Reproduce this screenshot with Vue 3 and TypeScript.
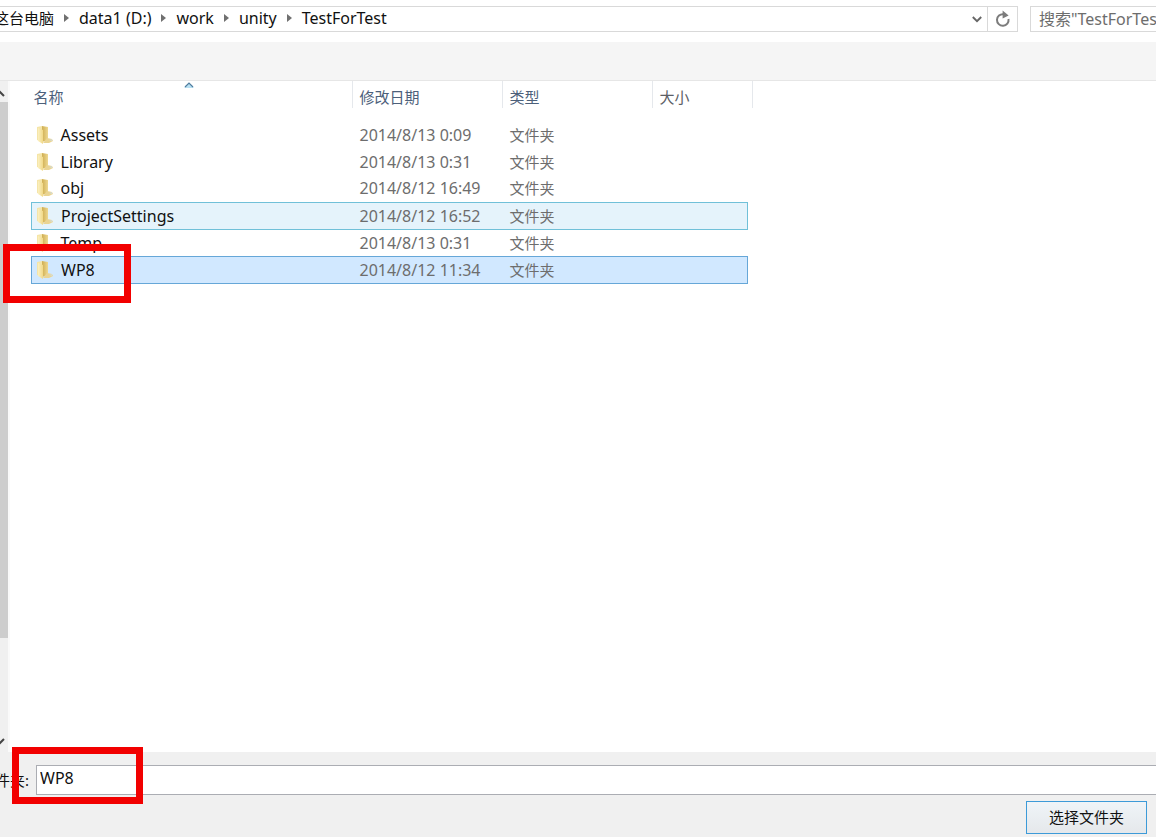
<script setup lang="ts">
import { ref } from 'vue'

interface Entry {
  name: string
  date: string
  kind: string
}

const root = '这台电脑'
const crumbs: string[] = ['data1 (D:)', 'work', 'unity', 'TestForTest']

const entries: Entry[] = [
  { name: 'Assets', date: '2014/8/13 0:09', kind: '文件夹' },
  { name: 'Library', date: '2014/8/13 0:31', kind: '文件夹' },
  { name: 'obj', date: '2014/8/12 16:49', kind: '文件夹' },
  { name: 'ProjectSettings', date: '2014/8/12 16:52', kind: '文件夹' },
  { name: 'Temp', date: '2014/8/13 0:31', kind: '文件夹' },
  { name: 'WP8', date: '2014/8/12 11:34', kind: '文件夹' },
]

const hovered = 'ProjectSettings'
const selected = ref('WP8')
const query = ref('')
</script>

<template>
  <div class="dialog">
    <header class="top">
      <nav class="address" aria-label="路径">
        <div class="crumbs">
          <a class="root" href="#" @click.prevent>{{ root }}</a>
          <template v-for="crumb in crumbs" :key="crumb">
            <svg class="sep" viewBox="0 0 5 8"><path d="M0 0L5 4L0 8Z" /></svg>
            <a href="#" @click.prevent>{{ crumb }}</a>
          </template>
        </div>
        <button class="drop" type="button" aria-label="历史记录">
          <svg width="10" height="7" viewBox="0 0 10 7"><path d="M0.8 1L5 5.2L9.2 1" fill="none" stroke="#666" stroke-width="1.9" /></svg>
        </button>
        <button class="refresh" type="button" aria-label="刷新">
          <svg width="16" height="18" viewBox="0 0 16 18">
            <path d="M13.5 9A5.8 5.8 0 1 1 8.5 4.2" fill="none" stroke="#7c7c7c" stroke-width="2" />
            <path d="M7.6 0.5L13.6 5.4L7.6 8.4Z" fill="#7c7c7c" />
          </svg>
        </button>
      </nav>
      <input v-model="query" class="search" type="text" aria-label="搜索" placeholder="搜索&quot;TestForTest&quot;">
    </header>

    <div class="toolbar"></div>

    <main class="body">
      <div class="scroll">
        <svg class="arrow" viewBox="0 0 8 21"><path d="M-4 15L0 11L4 15" /></svg>
        <div class="thumb"></div>
        <div class="rest"></div>
        <svg class="arrow" viewBox="0 0 8 21"><path d="M-4 8L0 12L4 8" /></svg>
      </div>
      <div class="list">
        <table>
          <colgroup><col class="c-name"><col class="c-date"><col class="c-kind"><col class="c-size"></colgroup>
          <thead>
            <tr>
              <th>
                <div class="head first">名称
                  <svg class="sort" width="10" height="6" viewBox="0 0 10 6"><path d="M0 6L5 1L10 6Z" fill="#b9e0f2" /><path d="M1 5L5 1L9 5" fill="none" stroke="#4f7c9e" stroke-width="1.2" /></svg>
                </div>
              </th>
              <th><div class="head">修改日期</div></th>
              <th><div class="head">类型</div></th>
              <th><div class="head last">大小</div></th>
            </tr>
          </thead>
          <tbody>
            <tr
              v-for="entry in entries"
              :key="entry.name"
              :class="{ hover: entry.name === hovered, selected: entry.name === selected }"
              @click="selected = entry.name"
            >
              <td>
                <div class="name">
                  <svg class="folder" width="18" height="20" viewBox="0 0 18 20">
                    <defs>
                      <linearGradient id="front" x1="0" x2="1" y1="0" y2="0">
                        <stop offset="0" stop-color="#fbf0c0" /><stop offset="1" stop-color="#f1d988" />
                      </linearGradient>
                      <linearGradient id="back" x1="0" x2="1" y1="0" y2="0">
                        <stop offset="0" stop-color="#cfae52" /><stop offset="1" stop-color="#eed890" />
                      </linearGradient>
                    </defs>
                    <path d="M1 2L6 1V17L1 15Z" fill="#f5e5a8" />
                    <path d="M6 1L12 2V15L6 17Z" fill="url(#back)" />
                    <path d="M2 3L7 5V19L2 16Z" fill="url(#front)" />
                    <path d="M7 18L11 13L16 14L17 16L13 18Z" fill="#ead492" />
                    <path d="M13 15L16 14L16 16Z" fill="#d3dcd6" />
                  </svg>
                  <span>{{ entry.name }}</span>
                </div>
              </td>
              <td class="meta">{{ entry.date }}</td>
              <td class="meta kind">{{ entry.kind }}</td>
              <td></td>
            </tr>
          </tbody>
        </table>
        <div class="mark mark-row"></div>
      </div>
    </main>

    <footer class="foot">
      <div class="field">
        <label for="folder-name">文件夹:</label>
        <input id="folder-name" v-model="selected" type="text">
      </div>
      <div class="actions">
        <button class="choose" type="button">选择文件夹</button>
      </div>
      <div class="mark mark-field"></div>
    </footer>
  </div>
</template>

<style>
body {
  margin: 0;
}
</style>

<style scoped>
.dialog,
.dialog * {
  box-sizing: border-box;
}

.dialog {
  display: flex;
  flex-direction: column;
  min-height: 100vh;
  overflow: hidden;
  background: #fff;
  color: #111;
  font: 16px/20px "Noto Sans", "Noto Sans CJK SC", sans-serif;
}

button,
input {
  margin: 0;
  font: inherit;
  color: inherit;
}

.top {
  display: flex;
  gap: 12px;
  padding: 6px 0 10px;
}

.address {
  display: flex;
  flex: 1;
  height: 26px;
  border: 1px solid #d9d9d9;
  border-left: 0;
}

.crumbs {
  display: flex;
  flex: 1;
  align-items: center;
  gap: 10px;
  margin-left: -6px;
  padding-bottom: 2px;
  white-space: nowrap;
}

.crumbs a {
  color: #111;
  text-decoration: none;
}

.crumbs .root {
  font-size: 15px;
}

.sep {
  width: 5px;
  height: 8px;
  fill: #707070;
}

.drop,
.refresh {
  display: flex;
  align-items: center;
  justify-content: center;
  padding: 0;
  border: 0;
  background: none;
}

.drop {
  width: 20px;
}

.refresh {
  width: 30px;
  border-left: 1px solid #d9d9d9;
}

.search {
  width: 126px;
  height: 26px;
  padding: 0 0 0 8px;
  border: 1px solid #d9d9d9;
  border-right: 0;
  border-radius: 0;
  background: #fff;
  outline: 0;
}

.search::placeholder {
  color: #6d6d6d;
  opacity: 1;
}

.toolbar {
  height: 39px;
  border-bottom: 1px solid #e6e6e6;
  background: #f5f5f5;
}

.body {
  display: flex;
  flex: 1;
}

.scroll {
  display: flex;
  flex-direction: column;
  width: 8px;
  background: #f0f0f0;
}

.arrow {
  width: 8px;
  height: 21px;
  fill: none;
  stroke: #444;
  stroke-width: 2;
}

.thumb {
  flex: 536;
  background: #cdcdcd;
}

.rest {
  flex: 93;
}

.list {
  position: relative;
  flex: 1;
  padding-left: 21px;
  border-left: 2px solid #fafafa;
}

table {
  width: 717px;
  table-layout: fixed;
  border-collapse: collapse;
}

.c-name { width: 320px; }
.c-date { width: 150px; }
.c-kind { width: 150px; }

th {
  height: 40px;
  padding: 0;
  vertical-align: top;
  text-align: left;
  font-size: 15px;
  font-weight: 400;
  color: #4c607a;
}

.head {
  position: relative;
  height: 27px;
  padding: 6px 0 0 7px;
  border-left: 1px solid #e5e8ec;
}

.first {
  padding-left: 2px;
  border-left: 0;
}

.last {
  margin-right: -5px;
  border-right: 1px solid #e5e8ec;
  color: #5c6066;
}

.sort {
  position: absolute;
  top: 1px;
  left: 152px;
}

td {
  height: 27px;
  padding: 0;
}

.meta {
  padding-left: 8px;
  color: #6d6d6d;
}

.kind {
  font-size: 15px;
}

.name {
  display: flex;
  align-items: center;
  gap: 7px;
  padding-left: 4px;
}

.folder {
  flex: none;
}

.hover {
  border: 1px solid #70c0d8;
  background: #e5f3fb;
}

.selected {
  border: 1px solid #66a7d8;
  background: #d1e8ff;
}

.foot {
  position: relative;
  padding-top: 13px;
  background: #f0f0f0;
}

.field {
  display: flex;
  align-items: center;
}

.field label {
  display: flex;
  flex: none;
  justify-content: flex-end;
  width: 36px;
  padding-right: 7px;
  font-size: 15px;
  white-space: nowrap;
}

.field input {
  flex: 1;
  min-width: 0;
  height: 30px;
  padding: 0 3px 4px;
  border: 1px solid #abadb3;
  border-right: 0;
  border-radius: 0;
  background: #fff;
  outline: 0;
}

.actions {
  display: flex;
  justify-content: flex-end;
  padding: 6px 9px 3px 0;
}

.choose {
  width: 121px;
  height: 33px;
  padding: 0 0 2px;
  border: 1px solid #3c9ad8;
  border-radius: 0;
  background: linear-gradient(#eff4f8, #e5e8eb);
  font-size: 15px;
}

.mark {
  position: absolute;
  border: 7px solid #f20000;
  pointer-events: none;
}

.mark-row {
  top: 163px;
  left: -7px;
  width: 128px;
  height: 59px;
}

.mark-field {
  top: -5px;
  left: 12px;
  width: 131px;
  height: 57px;
}
</style>
